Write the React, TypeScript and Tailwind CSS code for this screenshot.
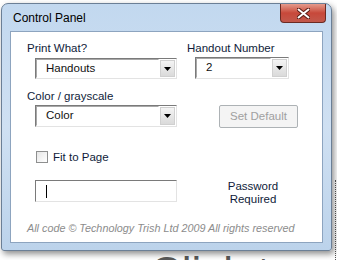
import React from "react";

const ui = { fontFamily: '"Liberation Sans", Arial, sans-serif' };

function Arrow() {
  return (
    <div className="flex h-full w-[15px] items-center justify-center border border-[#d0d0d0] bg-gradient-to-b from-[#f4f4f4] to-[#dadada]">
      <svg width="7" height="4" viewBox="0 0 7 4">
        <path d="M0 0h7L3.5 4z" fill="#000" />
      </svg>
    </div>
  );
}

function Select({ value, className }: { value: string; className: string }) {
  return (
    <div
      className={`flex items-stretch border border-t-[#7a7a7a] border-l-[#7a7a7a] border-b-[#e3e3e3] border-r-[#e3e3e3] bg-white ${className}`}
    >
      <div className="flex flex-1 items-center border border-t-[#a8a8a8] border-l-[#a8a8a8] border-b-transparent border-r-transparent pl-[9px] text-[11.5px] text-[#111]">
        {value}
      </div>
      <div className="p-[1px]">
        <Arrow />
      </div>
    </div>
  );
}

export default function App() {
  return (
    <div className="relative h-[260px] w-[337px] overflow-hidden bg-white" style={ui}>
      {/* slide behind the dialog */}
      <div className="absolute left-[150px] top-[251px] text-[44px] leading-none text-[#5a5a5a]">
        Click to add title
      </div>
      <div className="absolute right-[1px] top-[180px] h-[80px] border-r border-dotted border-[#555]" />

      {/* dialog window */}
      <div className="absolute left-[1px] top-[3px] w-[331px] rounded-t-[7px] rounded-b-[3px] border border-[#6b7f96] bg-gradient-to-b from-[#c2d8ef] via-[#cfe0f2] to-[#bcd3eb] px-[8px] pb-[7px] shadow-[2px_3px_6px_rgba(0,0,0,0.45)]">
        {/* title bar */}
        <div className="flex h-[27px] items-start justify-between">
          <div className="pl-[3px] pt-[7px] text-[12px] leading-[14px] text-[#000]">Control Panel</div>
          <div className="mr-[-3px] flex h-[19px] w-[46px] items-center justify-center rounded-b-[4px] border border-t-0 border-[#6b2a22] bg-gradient-to-b from-[#e49a8c] via-[#c7483a] to-[#c2584b]">
            <svg width="13" height="11" viewBox="0 0 13 11">
              <path d="M1.5 1.5l10 8M11.5 1.5l-10 8" stroke="#5a1d16" strokeWidth="4" strokeLinecap="round" />
              <path d="M1.5 1.5l10 8M11.5 1.5l-10 8" stroke="#fff" strokeWidth="2" strokeLinecap="round" />
            </svg>
          </div>
        </div>

        {/* client area */}
        <div className="h-[212px] border border-[#8da4bf] bg-white pl-[16px] pt-[9px] text-[11.5px] text-[#0f1c3a]">
          <div className="flex">
            <div className="flex w-[150px] flex-col">
              <div className="h-[14px] leading-[14px]">Print What?</div>
              <Select value="Handouts" className="ml-[8px] mt-[3px] h-[21px] w-[142px]" />
              <div className="mt-[10px] h-[14px] leading-[14px]">Color / grayscale</div>
              <Select value="Color" className="ml-[8px] mt-[2px] h-[22px] w-[142px]" />
            </div>
            <div className="ml-[10px] flex flex-col">
              <div className="h-[14px] leading-[14px]">Handout Number</div>
              <Select value="2" className="ml-[8px] mt-[2px] h-[22px] w-[94px]" />
              <div className="ml-[32px] mt-[26px] flex h-[23px] w-[79px] items-center justify-center rounded-[2px] border border-[#adb2b5] bg-[#f4f4f4] text-[#a0a0a0]">
                Set Default
              </div>
            </div>
          </div>

          <div className="ml-[9px] mt-[22px] flex items-center gap-[5px]">
            <div className="h-[12px] w-[12px] border border-[#8e8f8f] bg-gradient-to-br from-[#e6e6e6] to-white" />
            <span className="leading-[14px]">Fit to Page</span>
          </div>

          <div className="mt-[16px] flex">
            <div className="ml-[8px] flex h-[22px] w-[142px] items-center border border-t-[#7a7a7a] border-l-[#7a7a7a] border-b-[#e3e3e3] border-r-[#e3e3e3] bg-white pl-[10px]">
              <div className="h-[13px] w-[1px] bg-black" />
            </div>
            <div className="ml-[26px] w-[100px] text-center leading-[13px]">
              Password
              <br />
              Required
            </div>
          </div>

          <div className="mt-[15px] text-[10.8px] italic leading-[14px] text-[#8c8c8c]">
            All code © Technology Trish Ltd 2009 All rights reserved
          </div>
        </div>
      </div>
    </div>
  );
}
